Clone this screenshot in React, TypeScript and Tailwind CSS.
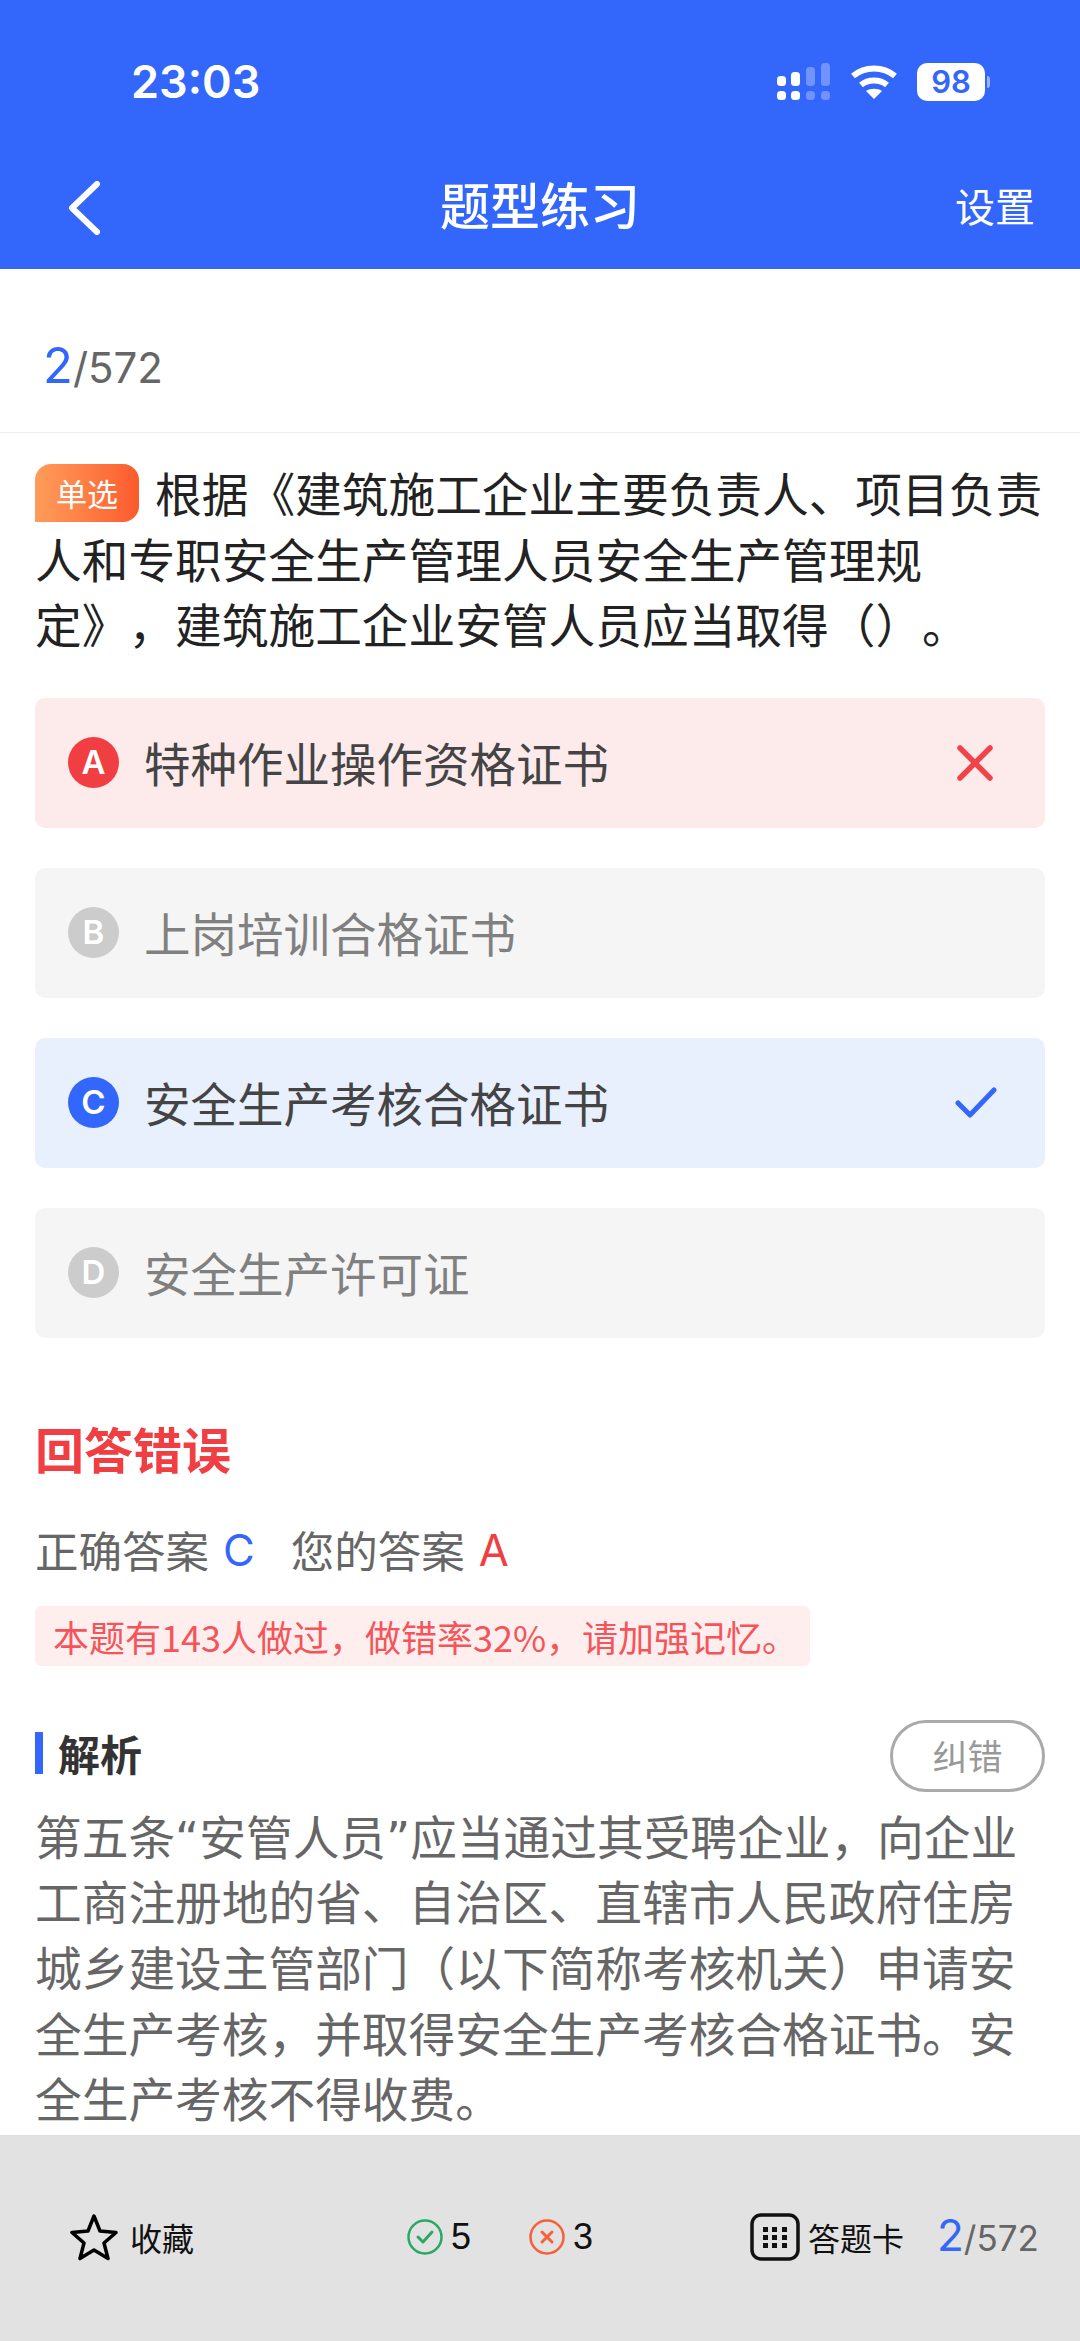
const CJK = "font-['Noto_Sans_CJK_SC','Liberation_Sans',sans-serif]"

function SignalIcon() {
  return (
    <svg width="54" height="38" viewBox="0 0 54 38" fill="white">
      <rect x="0" y="13" width="9" height="10" rx="3.5" />
      <rect x="14" y="9" width="9" height="14" rx="3.5" />
      <rect x="29" y="4" width="9" height="19" rx="3.5" opacity="0.3" />
      <rect x="44" y="0" width="9" height="23" rx="3.5" opacity="0.3" />
      <rect x="0" y="28" width="9" height="9" rx="3.5" />
      <rect x="14" y="28" width="9" height="9" rx="3.5" />
      <rect x="29" y="28" width="9" height="9" rx="3.5" opacity="0.3" />
      <rect x="44" y="28" width="9" height="9" rx="3.5" opacity="0.3" />
    </svg>
  )
}

function WifiIcon() {
  return (
    <svg width="46" height="36" viewBox="0 0 46 36" fill="none" stroke="white" strokeWidth="6">
      <path d="M2 12 C14 2 32 2 44 12" />
      <path d="M10 21 C17 15 29 15 36 21" />
      <path d="M23 35 L15 27 C19 24 27 24 31 27 Z" fill="white" stroke="none" />
    </svg>
  )
}

function OptionCircle({ letter, color }: { letter: string; color: string }) {
  return (
    <span className={`w-[51px] h-[51px] rounded-full flex items-center justify-center text-white text-[33px] font-semibold font-['Inter',sans-serif] shrink-0 ${color}`}>
      {letter}
    </span>
  )
}

function Option({ letter, text, bg, circle, textColor, mark }: {
  letter: string
  text: string
  bg: string
  circle: string
  textColor: string
  mark?: React.ReactNode
}) {
  return (
    <div className={`h-[130px] rounded-[10px] flex items-center pl-[33px] pr-[51px] ${bg}`}>
      <OptionCircle letter={letter} color={circle} />
      <span className={`ml-[25px] text-[46.5px] leading-none flex-1 ${textColor}`}>{text}</span>
      {mark}
    </div>
  )
}

export default function App() {
  return (
    <div className={`w-[1080px] h-[2341px] bg-white flex flex-col overflow-hidden [text-spacing-trim:space-all] ${CJK}`}>
      {/* Header */}
      <header className="h-[269px] bg-[#3366fa] text-white flex flex-col shrink-0">
        <div className="h-[164px] flex items-center pl-[131px] pr-[90px]">
          <span className="text-[45px] font-semibold font-['Inter',sans-serif] flex-1">23:03</span>
          <SignalIcon />
          <span className="ml-[20px]"><WifiIcon /></span>
          <span className="ml-[20px] w-[68px] h-[38px] bg-white rounded-[10px] text-[#3366fa] text-[31px] font-semibold font-['Inter',sans-serif] flex items-center justify-center">98</span>
          <span className="ml-[2px] w-[3px] h-[12px] bg-white/50 rounded-r-full" />
        </div>
        <div className="h-[85px] flex items-start pl-[67px] pr-[45px] pt-[4px]">
          <svg className="mt-[13px]" width="34" height="54" viewBox="0 0 34 54" fill="none" stroke="white" strokeWidth="6" strokeLinecap="round" strokeLinejoin="round">
            <path d="M30 3 L5 27 L30 51" />
          </svg>
          <span className="ml-[339px] text-[50px] leading-[70px] font-medium flex-1">题型练习</span>
          <span className="text-[40px] leading-[70px] mt-[2px]">设置</span>
        </div>
      </header>

      {/* Progress */}
      <div className="h-[164px] border-b border-[#f0f0f0] flex items-baseline pl-[43px] pt-[60px] font-['Inter',sans-serif] shrink-0">
        <span className="text-[49px] text-[#3366fa]">2</span>
        <span className="text-[42px] text-[#666666]">/572</span>
      </div>

      {/* Question */}
      <div className="px-[35px] pt-[26px] shrink-0">
        <p className="text-[46.7px] leading-[65.5px] text-[#222222] whitespace-nowrap">
          <span className="inline-flex w-[104px] h-[58px] align-[6px] mr-[16px] items-center justify-center rounded-tl-[16px] rounded-tr-[16px] rounded-br-[16px] bg-gradient-to-r from-[#ff9c59] to-[#fb5a2c] text-white text-[31px] leading-none">单选</span>
          根据《建筑施工企业主要负责人、项目负责<br />
          人和专职安全生产管理人员安全生产管理规<br />
          定》，建筑施工企业安管人员应当取得（）。
        </p>

        {/* Options */}
        <div className="mt-[42px] flex flex-col gap-[40px]">
          <Option
            letter="A"
            text="特种作业操作资格证书"
            bg="bg-[#fdeaea]"
            circle="bg-[#f03e42]"
            textColor="text-[#444444]"
            mark={
              <svg width="38" height="38" viewBox="0 0 38 38" fill="none" stroke="#f0444a" strokeWidth="5.5" strokeLinecap="round">
                <path d="M4 4 L34 34 M34 4 L4 34" />
              </svg>
            }
          />
          <Option letter="B" text="上岗培训合格证书" bg="bg-[#f5f5f5]" circle="bg-[#cccccc]" textColor="text-[#808080]" />
          <Option
            letter="C"
            text="安全生产考核合格证书"
            bg="bg-[#e8effd]"
            circle="bg-[#3366fa]"
            textColor="text-[#444444]"
            mark={
              <svg className="-mr-[3px]" width="42" height="32" viewBox="0 0 42 32" fill="none" stroke="#3366fa" strokeWidth="5" strokeLinecap="round" strokeLinejoin="round">
                <path d="M3 16 L15 28 L39 3" />
              </svg>
            }
          />
          <Option letter="D" text="安全生产许可证" bg="bg-[#f5f5f5]" circle="bg-[#cccccc]" textColor="text-[#808080]" />
        </div>

        {/* Result */}
        <h2 className="mt-[75px] text-[49px] leading-[70px] font-bold text-[#f03e42]">回答错误</h2>
        <div className="mt-[37px] flex items-center text-[43.5px] leading-[60px] text-[#666666]">
          <span>正确答案</span>
          <span className="ml-[14px] text-[#3366fa] font-['Inter',sans-serif]">C</span>
          <span className="ml-[36px]">您的答案</span>
          <span className="ml-[14px] text-[#f03e42] font-['Inter',sans-serif]">A</span>
        </div>
        <div className="mt-[26px] w-[775px] h-[60px] rounded-[6px] bg-[#ffeeee] flex items-center pl-[18px] text-[36px] leading-none text-[#f4555a] whitespace-nowrap">
          本题有143人做过，做错率32%，请加强记忆。
        </div>

        {/* Analysis */}
        <div className="mt-[54px] flex items-center justify-between">
          <div className="flex items-center pb-[6px]">
            <span className="w-[8px] h-[42px] bg-[#3366fa]" />
            <span className="ml-[15px] text-[42px] leading-none font-bold text-[#333333]">解析</span>
          </div>
          <span className="w-[155px] h-[72px] rounded-full border-[3px] border-[#aaaaaa] flex items-center justify-center text-[35px] text-[#999999]">纠错</span>
        </div>
        <p className="mt-[15px] text-[46.7px] leading-[65.7px] text-[#666666] font-['DejaVu_Sans','Noto_Sans_CJK_SC',sans-serif]">
          第五条“安管人员”应当通过其受聘企业，向企业工商注册地的省、自治区、直辖市人民政府住房城乡建设主管部门（以下简称考核机关）申请安全生产考核，并取得安全生产考核合格证书。安全生产考核不得收费。
        </p>
      </div>

      <div className="flex-1" />

      {/* Bottom bar */}
      <footer className="h-[206px] bg-[#e2e2e2] flex items-start pt-[78px] shrink-0 text-[#111111]">
        <div className="w-[390px] pl-[70px] flex items-center">
          <svg width="48" height="48" viewBox="0 0 48 48" fill="none" stroke="#000000" strokeWidth="3.5" strokeLinejoin="round">
            <path d="M24 3 L30 18 L46 19.5 L34 30 L38 45.5 L24 37 L10 45.5 L14 30 L2 19.5 L18 18 Z" />
          </svg>
          <span className="ml-[12px] text-[32px] leading-none">收藏</span>
        </div>
        <div className="w-[360px] pl-[17px] flex items-center h-[48px] text-[36px] font-['Liberation_Sans',sans-serif]">
          <svg width="36" height="36" viewBox="0 0 36 36" fill="none" stroke="#2aa866" strokeWidth="2.5" strokeLinecap="round" strokeLinejoin="round">
            <circle cx="18" cy="18" r="16.5" />
            <path d="M11 18 L16 23 L25 13" strokeWidth="3" />
          </svg>
          <span className="ml-[8px]">5</span>
          <svg className="ml-[58px]" width="36" height="36" viewBox="0 0 36 36" fill="none" stroke="#f8603a" strokeWidth="2.5" strokeLinecap="round">
            <circle cx="18" cy="18" r="16.5" />
            <path d="M13 13 L23 23 M23 13 L13 23" strokeWidth="3" />
          </svg>
          <span className="ml-[8px]">3</span>
        </div>
        <div className="flex items-baseline">
          <svg className="self-center" width="50" height="48" viewBox="0 0 50 48" fill="#111111">
            <rect x="2" y="2" width="46" height="44" rx="9" fill="none" stroke="#111111" strokeWidth="3.5" />
            <rect x="13" y="14" width="5" height="5" />
            <rect x="22" y="14" width="5" height="5" />
            <rect x="32" y="14" width="5" height="5" />
            <rect x="13" y="22" width="5" height="5" />
            <rect x="22" y="22" width="5" height="5" />
            <rect x="32" y="22" width="5" height="5" />
            <rect x="13" y="30" width="5" height="5" />
            <rect x="22" y="30" width="5" height="5" />
            <rect x="32" y="30" width="5" height="5" />
          </svg>
          <span className="ml-[8px] text-[32px] leading-none self-center">答题卡</span>
          <span className="ml-[33px] text-[44px] leading-none text-[#3366fa] font-['Inter',sans-serif]">2</span>
          <span className="text-[35px] leading-none text-[#666666] font-['Inter',sans-serif]">/572</span>
        </div>
      </footer>
    </div>
  )
}
